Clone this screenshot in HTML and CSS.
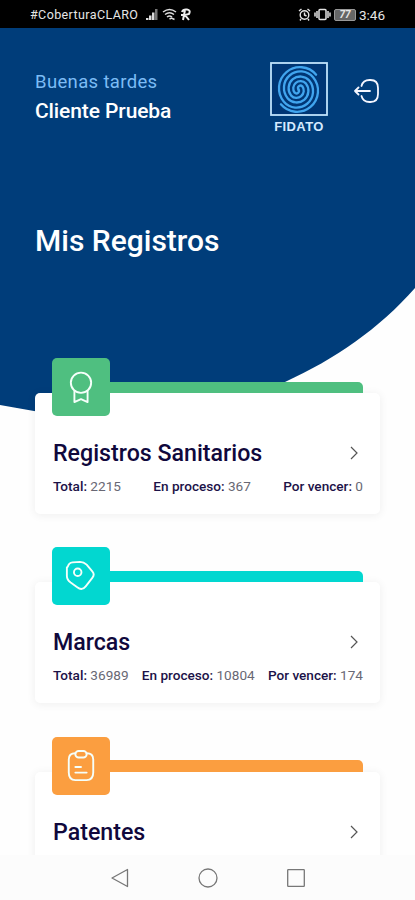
FILE: index.html
```html
<!DOCTYPE html>
<html lang="es">
<head>
<meta charset="utf-8">
<meta name="viewport" content="width=device-width, initial-scale=1">
<title>Mis Registros</title>
<link rel="stylesheet" href="styles.css">
</head>
<body>
<div class="phone">
  <div class="status">
    <div class="status-left">
      <span class="carrier">#CoberturaCLARO</span>
      <svg width="14" height="13" viewBox="0 0 14 13" fill="#ddd"><path d="M1 12V10h2.500v2zM4 12V7.500h2.500V12zM7 12V4.500h2.500V12z"/><path d="M10 12V1h2.500v11z" fill="#777"/></svg>
      <svg width="15" height="13" viewBox="0 0 15 13" fill="none" stroke="#ddd" stroke-width="1.500"><path d="M1 4Q7.500-1 14 4M3 6.500Q7.500 3 12 6.500M5 9q2.500-2 5 0"/><path d="M7.500 11l2-1 3 1.500" /></svg>
      <svg width="12" height="13" viewBox="0 0 12 13" fill="none" stroke="#eee" stroke-width="2"><path d="M2 4q1-3 5-2.500T9 6L5 7l4 5M5 2L3 12M1 7h4"/></svg>
    </div>
    <div class="status-right">
      <svg width="13" height="13" viewBox="0 0 13 13" fill="none" stroke="#e4e4e4" stroke-width="1.400"><circle cx="6.500" cy="7" r="4.300"/><path d="M6.500 4.500V7l2 1M1 3l2.500-2M12 3L9.500 1M3 11l-1 1.500M10 11l1 1.500"/></svg>
      <svg width="17" height="13" viewBox="0 0 17 13" fill="none" stroke="#e4e4e4" stroke-width="1.500"><rect x="5" y="1.500" width="7" height="10" rx="1"/><path d="M3 3v7M14 3v7M1 4.500v4M16 4.500v4"/></svg>
      <span class="battery">77</span>
      <span class="clock">3:46</span>
    </div>
  </div>
  <main class="screen">
    <svg class="backdrop" width="415" height="390" viewBox="0 28 415 390"><path fill="#003d7a" d="M0 28H415V288C379 329 335 359 285 382S150 432 34 411L0 405Z"/></svg>
    <header class="top">
      <div class="greeting">
        <p class="hello">Buenas tardes</p>
        <p class="name">Cliente Prueba</p>
      </div>
      <div class="brand">
        <svg width="58" height="54" viewBox="0 0 58 54" fill="none"><rect x="1" y="1" width="56" height="52" fill="#003675" stroke="#bfe3fc" stroke-width="1.800"/>
          <g stroke="#41a5ee" stroke-width="2.300" stroke-linecap="round">
            <path d="M46.100 12.700A21 21 0 0 0 13.900 39.700A16.500 16.500 0 0 0 39.200 18.500A11.750 11.750 0 0 0 21.200 33.600A7.250 7.250 0 0 0 32.300 24.300A2.500 2.500 0 0 0 28.500 27.500"/>
            <path d="M10.900 42.300A21 21 0 0 0 43.100 15.300A16.500 16.500 0 0 0 17.800 36.500A11.750 11.750 0 0 0 35.800 21.400A7.250 7.250 0 0 0 24.700 30.700A2.500 2.500 0 0 0 28.500 27.500"/>
          </g>
        </svg>
        <span class="brand-name">FIDATO</span>
      </div>
      <svg class="logout" width="26" height="26" viewBox="0 0 26 26" fill="none" stroke="#f4f6ff" stroke-width="1.800" stroke-linecap="round" stroke-linejoin="round"><path d="M7.500 8c1-4 3-6 8-6h1c5 0 7.500 3 7.500 8v6c0 5-2 8-7.500 8h-1c-5 0-7-2-8-6M16 13H1M4.500 9.500L1 13 4.500 16.500"/></svg>
    </header>
    <h1 class="heading">Mis Registros</h1>

    <div class="cards">
      <section class="entry green">
        <div class="tab"><span class="tile"><svg width="32" height="32" viewBox="0 0 34 34"><circle cx="17" cy="12.500" r="10.800"/><path d="M10 21v12l7-3 7 3V21"/></svg></span><span class="strip"></span></div>
        <div class="card">
          <div class="row"><h2>Registros Sanitarios</h2><svg class="chevron" width="8" height="14" viewBox="0 0 8 14"><path d="M1 1l6 6-6 6"/></svg></div>
          <div class="stats"><span><b>Total:</b> 2215</span><span><b>En proceso:</b> 367</span><span><b>Por vencer:</b> 0</span></div>
        </div>
      </section>
      <section class="entry cyan">
        <div class="tab"><span class="tile"><svg width="32" height="32" viewBox="0 0 34 34"><path d="M3 7q1-4 5-4.500l8-.5q4 0 7 3l6 7q3 3.500 0 7l-7 9q-4 5-9 1l-7-5q-4-3-4-7V8z"/><circle cx="13.500" cy="13" r="4"/></svg></span><span class="strip"></span></div>
        <div class="card">
          <div class="row"><h2>Marcas</h2><svg class="chevron" width="8" height="14" viewBox="0 0 8 14"><path d="M1 1l6 6-6 6"/></svg></div>
          <div class="stats"><span><b>Total:</b> 36989</span><span><b>En proceso:</b> 10804</span><span><b>Por vencer:</b> 174</span></div>
        </div>
      </section>
      <section class="entry orange">
        <div class="tab"><span class="tile"><svg width="32" height="32" viewBox="0 0 34 34"><path d="M11 3.500C6 3.500 4 6 4 10v14c0 5 2 8 7 8h12c5 0 7-3 7-8V10c0-4-2-6.500-7-6.500"/><rect x="11" y="1" width="12" height="7" rx="3.500"/><path d="M11 18h6M11 24h12"/></svg></span><span class="strip"></span></div>
        <div class="card">
          <div class="row"><h2>Patentes</h2><svg class="chevron" width="8" height="14" viewBox="0 0 8 14"><path d="M1 1l6 6-6 6"/></svg></div>
        </div>
      </section>
    </div>
  </main>
  <nav class="navbar">
    <svg width="20" height="20" viewBox="0 0 20 20"><path d="M17.500 1.500v17L2 10z"/></svg>
    <svg width="20" height="20" viewBox="0 0 20 20"><circle cx="10" cy="10" r="9"/></svg>
    <svg width="20" height="20" viewBox="0 0 20 20"><rect x="1.700" y="1.700" width="16.600" height="16.600" rx=".6"/></svg>
  </nav>
</div>
</body>
</html>
```
FILE: styles.css
```css
* { box-sizing: border-box; }
body, h1, h2, p { margin: 0; }
body { font-family: Roboto, "Liberation Sans", sans-serif; background: #fff; }
.phone { width: 415px; height: 900px; display: flex; flex-direction: column; overflow: hidden; }
.status { height: 28px; flex: none; background: #000; color: #e6e6e6; display: flex; justify-content: space-between; align-items: center; padding: 1px 29px 0 30px; }
.status-left, .status-right { display: flex; align-items: center; }
.status-left { gap: 3px; }
.status-right { gap: 3px; }
.carrier { font-size: 12.500px; letter-spacing: .4px; width: 112px; white-space: nowrap; }
.battery { width: 22px; height: 12px; border: 1px solid #999; border-radius: 2px; background: #666; font-size: 10px; line-height: 10px; font-style: italic; text-align: center; font-weight: 700; }
.clock { font-size: 13.500px; width: 27px; white-space: nowrap; }
.screen { flex: 1; min-height: 0; overflow: hidden; position: relative; background: #fefefe; }
.backdrop { position: absolute; left: 0; top: 0; }
.top, .heading, .cards { position: relative; }
.top { display: flex; padding: 34px 35px 0; height: 112px; }
.greeting { width: 234px; padding-top: 8px; }
.hello { font-size: 18.500px; line-height: 25px; letter-spacing: .35px; color: #7cbcf5; }
.name { font-size: 21px; line-height: 32px; letter-spacing: -.1px; font-weight: 500; color: #fff; }
.brand { width: 60px; display: flex; flex-direction: column; align-items: center; }
.brand-name { font: 700 13px/22px "Liberation Sans", sans-serif; color: #d5eaff; letter-spacing: .4px; }
.logout { margin: 16px 0 0 25px; }
.heading { padding: 81px 0 0 35px; font-size: 30px; line-height: 40px; font-weight: 500; color: #fff; }
.cards { padding: 97px 35px 0 35px; display: flex; flex-direction: column; gap: 33px; }
.entry { height: 156.300px; flex: none; }
.tab { display: flex; height: 35px; padding: 0 17px; position: relative; z-index: 1; }
.tile { width: 58px; height: 58px; flex: none; border-radius: 5px; display: flex; align-items: center; justify-content: center; background: var(--tone); }
.tile svg { fill: none; stroke: #f5fffa; stroke-width: 2; stroke-linecap: round; stroke-linejoin: round; }
.strip { flex: 1; height: 11.500px; align-self: flex-end; background: var(--tone); border-radius: 0 5px 0 0; }
.green { --tone: #4fbf80; }
.cyan { --tone: #02d7d0; }
.orange { --tone: #fb9e40; }
.card { height: 121px; border-radius: 5px; background: #fff; padding: 43px 17px 0 18px; box-shadow: 0 1px 8px 1px rgba(0,0,0,.055); }
.row { display: flex; align-items: center; justify-content: space-between; height: 34px; padding-right: 5px; }
.row h2 { font-size: 23.200px; font-weight: 500; color: #10083c; }
.chevron { fill: none; stroke: #555; stroke-width: 1.200; }
.stats { display: flex; justify-content: space-between; font-size: 13.600px; line-height: 16px; margin-top: 8px; color: #686874; white-space: nowrap; }
.stats b { font-weight: 500; color: #1c1248; }
.navbar { height: 45px; flex: none; background: #fcfcfc; display: flex; justify-content: center; align-items: center; gap: 68px; }
.navbar svg { fill: none; stroke: #777; stroke-width: 1.300; stroke-linejoin: round; }
```
